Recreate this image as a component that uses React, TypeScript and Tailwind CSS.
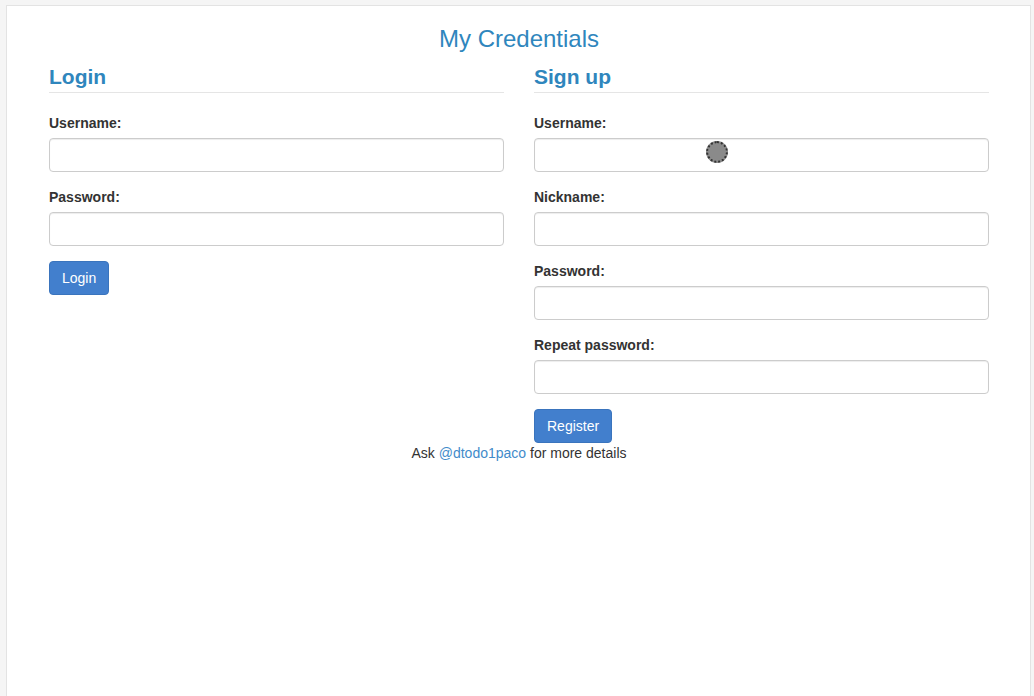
import React from "react";

const Field = ({ label, cursor }: { label: string; cursor?: boolean }) => (
  <div className="mb-[15px]">
    <label className="block mb-[5px] font-bold leading-[20px]">{label}</label>
    <div className="relative">
      <input
        type="text"
        className="block w-full h-[34px] px-3 rounded-[4px] border border-[#cccccc] bg-white shadow-[inset_0_1px_1px_rgba(0,0,0,0.075)] outline-none"
      />
      {cursor && (
        <span className="absolute left-[172px] top-[3px] w-[22px] h-[22px] rounded-full bg-[#8a8a8a] border-2 border-dotted border-[#333] ring-1 ring-white" />
      )}
    </div>
  </div>
);

const Heading = ({ children }: { children: React.ReactNode }) => (
  <h3 className="text-[21px] font-bold leading-[26px] pb-[2px] mb-5 border-b border-[#e5e5e5] text-[#2f86bd]">
    {children}
  </h3>
);

const Button = ({ children }: { children: React.ReactNode }) => (
  <button className="h-[34px] px-3 rounded-[4px] border border-[#3a74bd] bg-[#427fcd] text-white text-[14px] leading-[20px]">
    {children}
  </button>
);

export default function App() {
  return (
    <div
      className="min-h-screen bg-[#f5f5f5] pt-[5px] pl-[6px] pr-[3px] text-[14px] leading-[20px] text-[#333333]"
      style={{ fontFamily: '"Liberation Sans", Arial, sans-serif' }}
    >
      <div className="min-h-[700px] bg-white border border-[#e3e3e3] pt-5 pl-[42px] pr-[41px]">
        <h1 className="text-center text-[24px] leading-[26px] text-[#2f86bd] mb-[12px]">My Credentials</h1>
        <div className="grid grid-cols-2 gap-x-[30px]">
          <div>
            <Heading>Login</Heading>
            <Field label="Username:" />
            <Field label="Password:" />
            <Button>Login</Button>
          </div>
          <div>
            <Heading>Sign up</Heading>
            <Field label="Username:" cursor />
            <Field label="Nickname:" />
            <Field label="Password:" />
            <Field label="Repeat password:" />
            <Button>Register</Button>
          </div>
        </div>
        <p className="text-center">
          Ask <a className="text-[#428bca]">@dtodo1paco</a> for more details
        </p>
      </div>
    </div>
  );
}
